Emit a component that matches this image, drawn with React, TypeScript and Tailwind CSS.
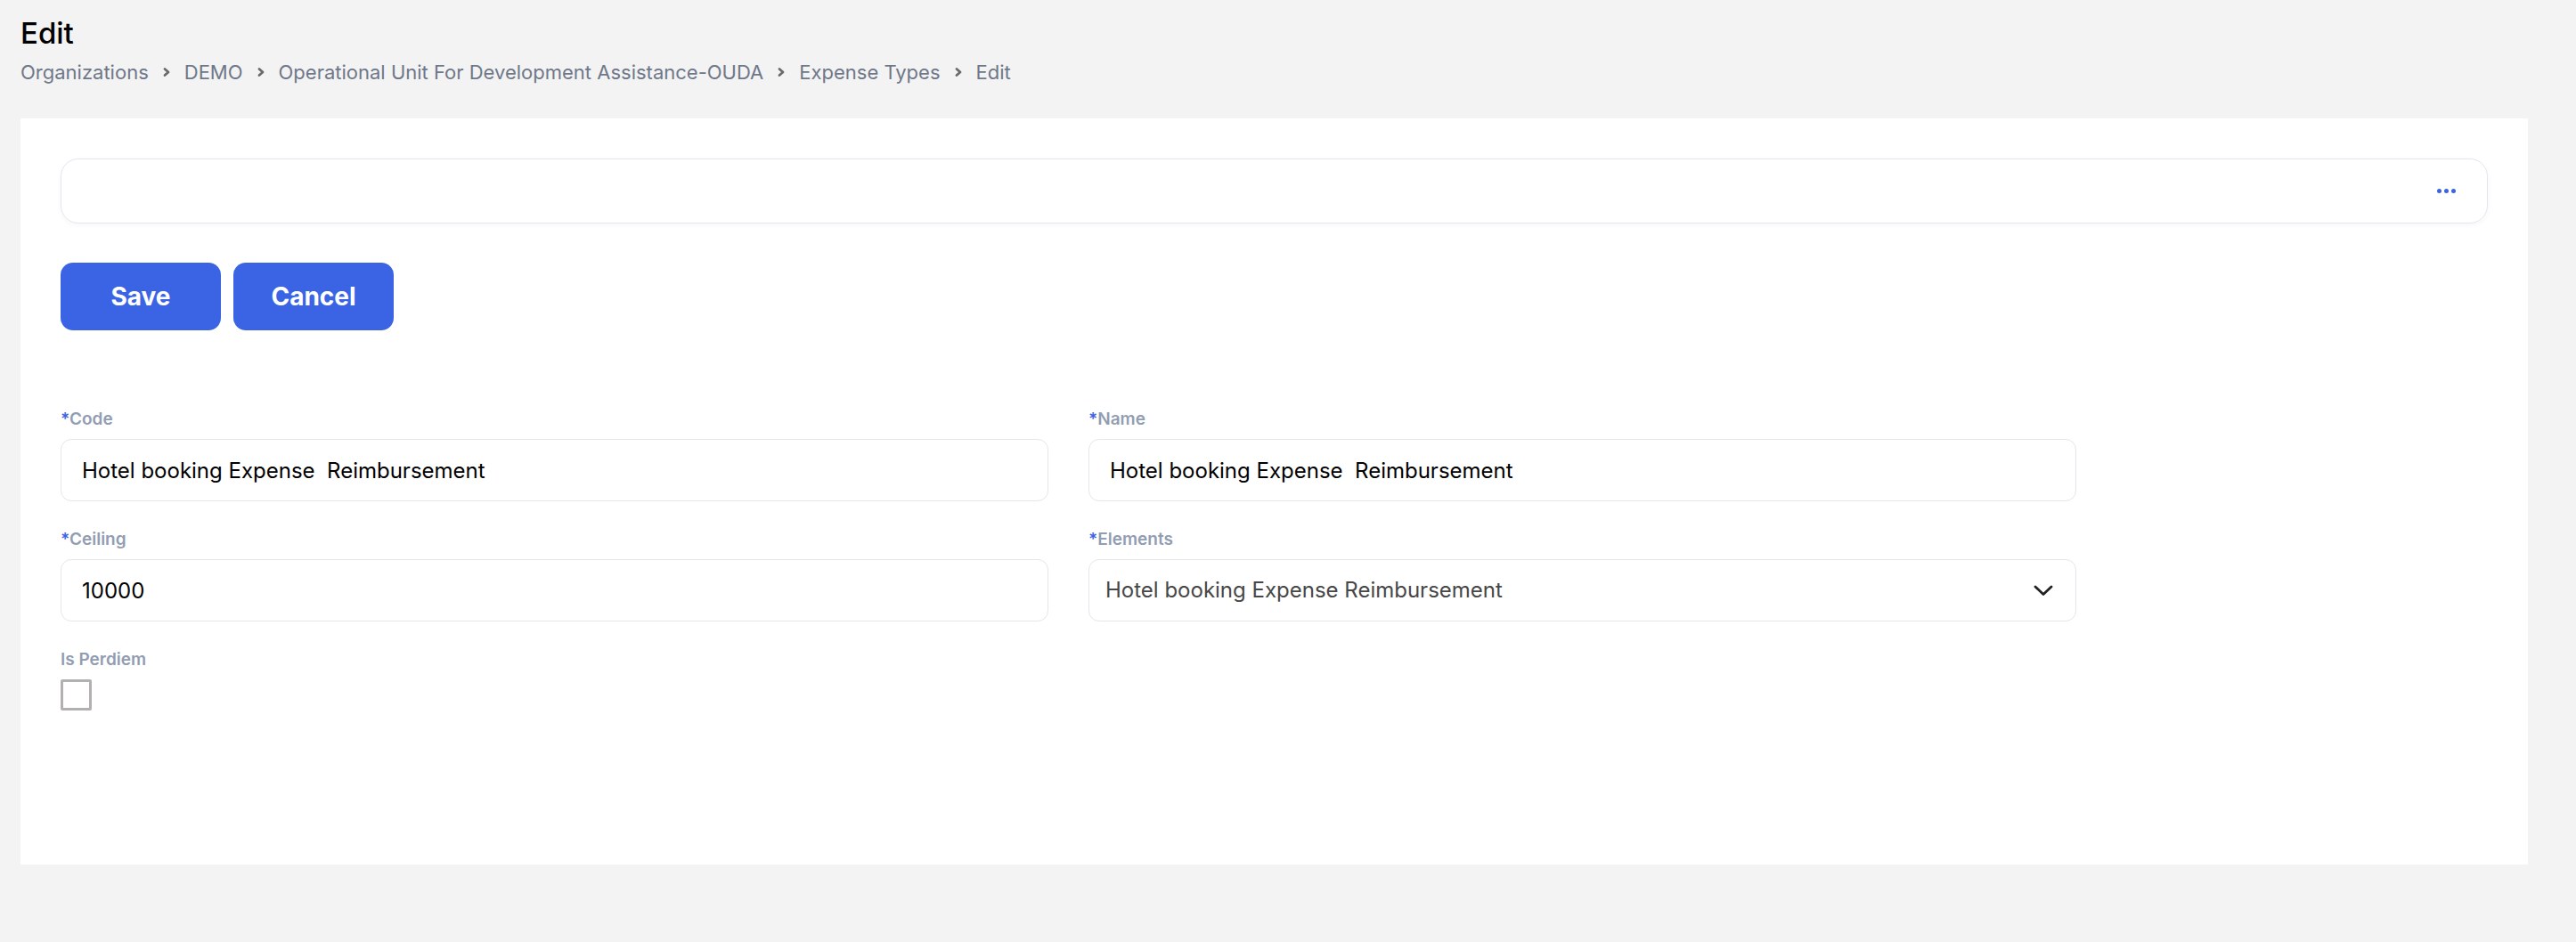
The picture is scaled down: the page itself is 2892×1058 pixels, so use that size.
import { ChangeEvent, useState } from "react";

const crumbs = [
  "Organizations",
  "DEMO",
  "Operational Unit For Development Assistance-OUDA",
  "Expense Types",
  "Edit",
];

function Chevron() {
  return (
    <svg width="10" height="12" viewBox="0 0 10 12" className="mx-[15px] shrink-0">
      <path d="M3 2.5 L7 6 L3 9.5" fill="none" stroke="#6b6b6b" strokeWidth="2.8" strokeLinecap="round" strokeLinejoin="round" />
    </svg>
  );
}

function Label({ text, required }: { text: string; required?: boolean }) {
  return (
    <label className="block text-[19px] leading-[26px] font-semibold text-[#929db2] mb-[9px]">
      {required && <span className="text-[#3b63e4]">*</span>}
      {text}
    </label>
  );
}

function TextField({ value, onChange }: { value: string; onChange: (v: string) => void }) {
  return (
    <input
      value={value}
      onChange={(e: ChangeEvent<HTMLInputElement>) => onChange(e.target.value)}
      className="w-full h-[70px] rounded-[12px] border border-[#e4e6ec] bg-white px-[23px] text-[24px] text-black outline-none"
    />
  );
}

export default function App() {
  const [code, setCode] = useState("Hotel booking Expense  Reimbursement");
  const [name, setName] = useState("Hotel booking Expense  Reimbursement");
  const [ceiling, setCeiling] = useState("10000");
  const [perdiem, setPerdiem] = useState(false);

  return (
    <div
      className="min-h-[1058px] bg-[#f3f3f3] px-[23px] pt-[17px] pb-[87px]"
      style={{ fontFamily: "Inter, 'Noto Sans', sans-serif" }}
    >
      {/* Header */}
      <h1 className="text-[33px] leading-[40px] font-medium text-black">Edit</h1>
      <nav className="flex items-center mt-[8px] text-[22px] leading-[32px] text-[#6f7889]">
        {crumbs.map((c, i) => (
          <div key={c} className="flex items-center">
            {i > 0 && <Chevron />}
            <span className="cursor-pointer">{c}</span>
          </div>
        ))}
      </nav>

      {/* Card */}
      <div className="mt-[36px] w-[2815px] h-[838px] bg-white p-[45px]">
        <div className="h-[73px] rounded-[20px] border border-[#e4e6ef] shadow-[0_2px_6px_rgba(0,0,0,0.04)] flex items-center justify-end pr-[35px]">
          <button className="flex items-center gap-[3px]">
            <span className="w-[5px] h-[5px] rounded-full bg-[#3b63e4]" />
            <span className="w-[5px] h-[5px] rounded-full bg-[#3b63e4]" />
            <span className="w-[5px] h-[5px] rounded-full bg-[#3b63e4]" />
          </button>
        </div>

        <div className="flex gap-[14px] mt-[44px]">
          <button className="w-[180px] h-[76px] rounded-[14px] bg-[#3a64e4] text-white text-[28px] font-bold">
            Save
          </button>
          <button className="w-[180px] h-[76px] rounded-[14px] bg-[#3a64e4] text-white text-[28px] font-bold">
            Cancel
          </button>
        </div>

        <div className="w-[2263px] mt-[87px] grid grid-cols-2 gap-x-[45px] gap-y-[30px]">
          <div>
            <Label text="Code" required />
            <TextField value={code} onChange={setCode} />
          </div>
          <div>
            <Label text="Name" required />
            <TextField value={name} onChange={setName} />
          </div>
          <div>
            <Label text="Ceiling" required />
            <TextField value={ceiling} onChange={setCeiling} />
          </div>
          <div>
            <Label text="Elements" required />
            <div className="w-full h-[70px] rounded-[12px] border border-[#e4e6ec] bg-white pl-[18px] pr-[25px] flex items-center justify-between cursor-pointer">
              <span className="text-[24px] text-[#474747]">Hotel booking Expense Reimbursement</span>
              <svg width="22" height="13" viewBox="0 0 22 13">
                <path d="M2 2 L11 10.5 L20 2" fill="none" stroke="#222" strokeWidth="2.8" strokeLinecap="round" strokeLinejoin="round" />
              </svg>
            </div>
          </div>
          <div>
            <Label text="Is Perdiem" />
            <button
              onClick={() => setPerdiem(!perdiem)}
              className="mt-[1px] w-[35px] h-[35px] border-[3px] border-[#b3b0b0] rounded-[2px] bg-white flex items-center justify-center"
            >
              {perdiem && <span className="w-[17px] h-[17px] bg-[#3a64e4]" />}
            </button>
          </div>
        </div>
      </div>
    </div>
  );
}
